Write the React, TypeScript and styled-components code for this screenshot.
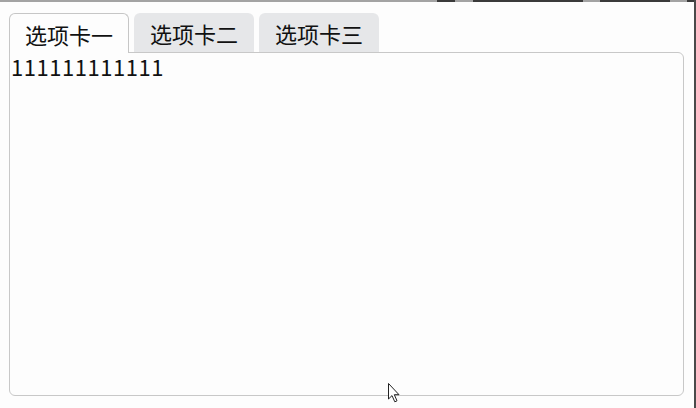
import React, { useState } from "react";
import styled, { createGlobalStyle } from "styled-components";

const Global = createGlobalStyle`
  html, body { margin: 0; padding: 0; background: #fdfdfd; }
  body { font-family: "Noto Sans CJK SC", "Noto Sans", sans-serif; color: #111; }
`;

const Page = styled.div`
  position: relative;
  width: 696px;
  height: 408px;
  box-sizing: border-box;
  border-right: 2px solid #4a4a4a;
  overflow: hidden;
`;

const TopRule = styled.div`
  height: 2px;
  background: linear-gradient(
    to right,
    #a3a3a3 0, #a3a3a3 437px,
    #3a3a3a 437px, #3a3a3a 455px,
    #a3a3a3 455px, #a3a3a3 473px,
    #3a3a3a 473px, #3a3a3a 583px,
    #a3a3a3 583px, #a3a3a3 600px,
    #3a3a3a 600px, #3a3a3a 670px,
    #a3a3a3 670px, #a3a3a3 687px,
    #3a3a3a 687px
  );
`;

const Body = styled.div`
  padding: 11px 0 0 9px;
`;

const TabBar = styled.div`
  display: flex;
  gap: 5px;
  align-items: flex-end;
`;

const Tab = styled.button<{ $active: boolean }>`
  box-sizing: border-box;
  width: 120px;
  height: ${(p) => (p.$active ? 40 : 39)}px;
  margin: 0 0 ${(p) => (p.$active ? -1 : 0)}px;
  padding: 0;
  font: inherit;
  font-size: 22px;
  line-height: 1;
  color: #111;
  border-radius: 6px 6px 0 0;
  border: ${(p) => (p.$active ? "1px solid #c6c6c6" : "none")};
  border-bottom: none;
  background: ${(p) => (p.$active ? "#fdfdfd" : "#e6e7e9")};
  position: relative;
  z-index: ${(p) => (p.$active ? 1 : 0)};
  cursor: pointer;
  display: flex;
  align-items: center;
  justify-content: center;
`;

const Panel = styled.div`
  box-sizing: border-box;
  width: 675px;
  height: 344px;
  border: 1px solid #c8c8c8;
  border-radius: 0 6px 6px 6px;
  background: #fdfdfd;
  font-size: 22px;
  line-height: 27px;
  letter-spacing: 0.55px;
  padding: 0 0 0 1px;
`;

const Cursor = styled.svg`
  position: absolute;
  left: 387px;
  top: 382px;
`;

const tabs = [
  { title: "选项卡一", content: "111111111111" },
  { title: "选项卡二", content: "222222222222" },
  { title: "选项卡三", content: "333333333333" },
];

export default function App() {
  const [active, setActive] = useState(0);
  return (
    <Page>
      <Global />
      <TopRule />
      <Body>
        <TabBar>
          {tabs.map((t, i) => (
            <Tab key={t.title} $active={i === active} onClick={() => setActive(i)}>
              {t.title}
            </Tab>
          ))}
        </TabBar>
        <Panel>{tabs[active].content}</Panel>
      </Body>
      <Cursor width="14" height="22" viewBox="0 0 14 22">
        <path
          d="M1.5 1.5 L1.5 17 L5 13.6 L7.8 19.8 L10 18.8 L7.3 12.7 L12 12.7 Z"
          fill="#fff"
          stroke="#222"
          strokeWidth="1"
          strokeLinejoin="miter"
        />
      </Cursor>
    </Page>
  );
}
